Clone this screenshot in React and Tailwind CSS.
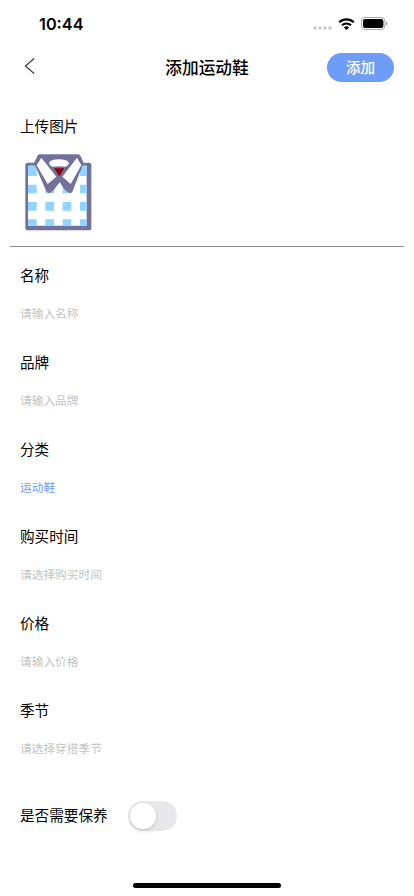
import React, { useState } from 'react';

const fields = [
  { label: '名称', placeholder: '请输入名称' },
  { label: '品牌', placeholder: '请输入品牌' },
  { label: '分类', value: '运动鞋' },
  { label: '购买时间', placeholder: '请选择购买时间' },
  { label: '价格', placeholder: '请输入价格' },
  { label: '季节', placeholder: '请选择穿搭季节' },
];

const StatusBar = () => (
  <div className="flex h-[45px] items-center justify-between pt-[2px] pr-[26px] pl-[39px]">
    <span className="font-['Inter'] text-[16.3px] leading-5 font-semibold">10:44</span>
    <div className="flex items-center">
      <svg className="mt-[8px] mr-[6px]" width="19" height="4" viewBox="0 0 19 4" fill="#cbcbcb">
        <circle cx="2" cy="2" r="1.8" />
        <circle cx="7" cy="2" r="1.8" />
        <circle cx="12" cy="2" r="1.8" />
        <circle cx="17" cy="2" r="1.8" />
      </svg>
      <svg className="mr-[6px]" width="17" height="12" viewBox="0 0 17 12" fill="none">
        <path d="M1.2 4.3a10.6 10.6 0 0 1 14.6 0" stroke="#000" strokeWidth="2.1" />
        <path d="M4 7.2a6.6 6.6 0 0 1 9 0" stroke="#000" strokeWidth="2" />
        <path d="M8.5 12 5.9 9.4a3.8 3.8 0 0 1 5.2 0Z" fill="#000" />
      </svg>
      <svg width="27" height="13" viewBox="0 0 27 13" fill="none">
        <rect x="0.5" y="0.5" width="23.4" height="12" rx="3.6" stroke="#a8a8a8" />
        <rect x="2" y="2" width="20.4" height="9" rx="2.2" fill="#000" />
        <path d="M25 4.6v4c.8-.3 1.4-1.1 1.4-2s-.6-1.7-1.4-2Z" fill="#a0a0a0" />
      </svg>
    </div>
  </div>
);

const Header = () => (
  <div className="grid h-[44px] grid-cols-[1fr_auto_1fr] items-center pr-[20px] pl-[24px]">
    <button className="justify-self-start pb-[2px]" aria-label="返回">
      <svg width="12" height="18" viewBox="0 0 12 18" fill="none">
        <path d="M10.2 1.3 1.4 9l8.8 7.7" stroke="#222" strokeWidth="1.1" />
      </svg>
    </button>
    <h1 className="-ml-[4px] pt-[1px] text-[16.7px] leading-6 font-medium">添加运动鞋</h1>
    <button className="h-[29px] w-[67px] justify-self-end rounded-full bg-[#6e9df8] pt-[1px] text-[14.6px] leading-[26px] font-medium text-white">
      添加
    </button>
  </div>
);

const ShirtIcon = () => (
  <svg width="76" height="84" viewBox="0 0 228 252">
    <rect x="16" y="38" width="198" height="203" rx="8" fill="#72719c" />
    <path d="M24 47H200V227H24Z" fill="#fff" />
    <g fill="#8fd5ff">
      <path d="M24 47h26v31H24ZM180 47h20v31h-20Z" />
      <path d="M24 104h26v26H24ZM76 104h26v26H76ZM128 104h26v26h-26ZM180 104h20v26h-20Z" />
      <path d="M24 156h26v26H24ZM76 156h26v26H76ZM128 156h26v26h-26ZM180 156h20v26h-20Z" />
      <path d="M24 208h26v19H24ZM76 208h26v19H76ZM128 208h26v19h-26ZM180 208h20v19h-20Z" />
    </g>
    {/* collar */}
    <path
      d="M58 13H173Q180 13 183 20L191 39L157 125Q153 131 147 128L136 121L119 97L102 119L90 128Q84 131 79 124L42 39L52 18Q54 13 58 13Z"
      fill="#72719c"
    />
    <path d="M87 39Q91 28 117 28Q143 28 147 39Q146 47 137 50Q117 47 97 50Q88 47 87 39Z" fill="#fff" />
    <path d="M102 55H133L118 79Z" fill="#930008" />
    <path d="M64 23 109 80 83 102 50 46Z" fill="#fff" />
    <path d="M171 23 127 80 152 102 184 46Z" fill="#fff" />
  </svg>
);

const Field = ({ label, value, placeholder }) => (
  <label className="flex h-[87px] flex-col pl-[20px]">
    <span className="h-[22px] text-[14.6px] leading-[22px]">{label}</span>
    <input
      type="text"
      defaultValue={value}
      placeholder={placeholder}
      className="mt-[17px] h-[20px] w-[200px] text-[11.7px] leading-[20px] text-[#6e9df8] outline-none placeholder:text-[#c4c4c4]"
    />
  </label>
);

const App = () => {
  const [needCare, setNeedCare] = useState(false);

  return (
    <div className="flex h-[896px] w-[414px] flex-col overflow-hidden bg-white font-['Inter','Noto_Sans_CJK_SC',sans-serif] text-black">
      <StatusBar />
      <Header />

      <div className="mx-[10px] h-[158px] border-b border-[#8c8c8c] pt-[27px] pl-[10px]">
        <div className="h-[22px] text-[14.6px] leading-[22px]">上传图片</div>
        <div className="mt-[12px]">
          <ShirtIcon />
        </div>
      </div>

      <div className="pt-[18px]">
        {fields.map((field) => (
          <Field key={field.label} {...field} />
        ))}
      </div>

      <div className="mt-[14px] flex h-[30px] items-center pl-[20px]">
        <span className="w-[108px] text-[14.6px] leading-[22px]">是否需要保养</span>
        <button
          role="switch"
          aria-checked={needCare}
          aria-label="是否需要保养"
          onClick={() => setNeedCare(!needCare)}
          className={`flex h-[30px] w-[49px] items-center rounded-full px-[2px] ${
            needCare ? 'justify-end bg-[#6e9df8]' : 'bg-[#e8e8ea]'
          }`}
        >
          <span className="h-[26px] w-[26px] rounded-full bg-white shadow-[0_2px_4px_rgba(0,0,0,0.14)]" />
        </button>
      </div>

      <div className="mt-auto mb-[8px] h-[5px] w-[148px] self-center rounded-full bg-black" />
    </div>
  );
};

export default App;
